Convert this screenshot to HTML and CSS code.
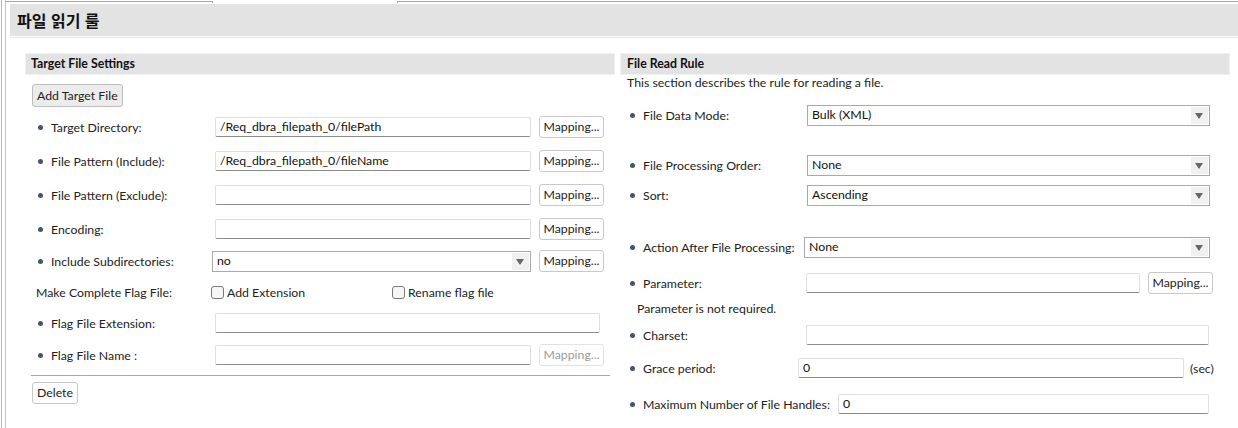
FILE: index.html
```html
<!DOCTYPE html>
<html lang="ko">
<head>
    <meta charset="UTF-8">
    <title>파일 읽기 룰</title>
    <link rel="stylesheet" href="styles.css">
</head>
<body>
    <div class="frame">
        <div class="page">
            <div class="tabs">
                <span class="tab-line tab-left"></span>
                <span class="tab-gap"></span>
                <span class="tab-line tab-right"></span>
            </div>
            <div class="page-head"><h1>파일 읽기 룰</h1></div>
            <div class="head-rule"></div>

            <div class="columns">
                <!-- 왼쪽: 대상 파일 설정 -->
                <section class="col col-left">
                    <div class="sec-head">Target File Settings</div>
                    <button class="btn btn-grey btn-add">Add Target File</button>

                    <div class="row first">
                        <div class="lbl"><i class="dot"></i>Target Directory:</div>
                        <div class="txt w-315">/Req_dbra_filepath_0/filePath</div>
                        <button class="btn btn-map">Mapping...</button>
                    </div>
                    <div class="row">
                        <div class="lbl"><i class="dot"></i>File Pattern (Include):</div>
                        <div class="txt w-315">/Req_dbra_filepath_0/fileName</div>
                        <button class="btn btn-map">Mapping...</button>
                    </div>
                    <div class="row">
                        <div class="lbl"><i class="dot"></i>File Pattern (Exclude):</div>
                        <div class="txt w-315"></div>
                        <button class="btn btn-map">Mapping...</button>
                    </div>
                    <div class="row">
                        <div class="lbl"><i class="dot"></i>Encoding:</div>
                        <div class="txt w-315"></div>
                        <button class="btn btn-map">Mapping...</button>
                    </div>
                    <div class="row row-tight">
                        <div class="lbl lbl-sel"><i class="dot"></i>Include Subdirectories:</div>
                        <div class="sel w-318">no<span class="arrow"></span></div>
                        <button class="btn btn-map">Mapping...</button>
                    </div>
                    <div class="row row-check">
                        <div class="lbl lbl-check">Make Complete Flag File:</div>
                        <label class="check check-wide"><span class="box"></span>Add Extension</label>
                        <label class="check"><span class="box"></span>Rename flag file</label>
                    </div>
                    <div class="row row-tight">
                        <div class="lbl"><i class="dot"></i>Flag File Extension:</div>
                        <div class="txt w-384"></div>
                    </div>
                    <div class="row">
                        <div class="lbl"><i class="dot"></i>Flag File Name :</div>
                        <div class="txt w-315"></div>
                        <button class="btn btn-map" disabled>Mapping...</button>
                    </div>

                    <div class="sep"></div>
                    <button class="btn btn-del">Delete</button>
                </section>

                <!-- 오른쪽: 파일 읽기 룰 -->
                <section class="col col-right">
                    <div class="sec-head">File Read Rule</div>
                    <div class="desc">This section describes the rule for reading a file.</div>

                    <div class="row row-r first">
                        <div class="lbl"><i class="dot"></i>File Data Mode:</div>
                        <div class="sel w-403">Bulk (XML)<span class="arrow"></span></div>
                    </div>
                    <div class="row row-r gap-20">
                        <div class="lbl"><i class="dot"></i>File Processing Order:</div>
                        <div class="sel w-403">None<span class="arrow"></span></div>
                    </div>
                    <div class="row row-r">
                        <div class="lbl"><i class="dot"></i>Sort:</div>
                        <div class="sel w-403">Ascending<span class="arrow"></span></div>
                    </div>
                    <div class="row row-r gap-22">
                        <div class="lbl lbl-176"><i class="dot"></i>Action After File Processing:</div>
                        <div class="sel w-406">None<span class="arrow"></span></div>
                    </div>
                    <div class="row row-r gap-6">
                        <div class="lbl lbl-178"><i class="dot"></i>Parameter:</div>
                        <div class="txt w-334"></div>
                        <button class="btn btn-map">Mapping...</button>
                    </div>
                    <div class="note">Parameter is not required.</div>
                    <div class="row row-r">
                        <div class="lbl lbl-178"><i class="dot"></i>Charset:</div>
                        <div class="txt w-403"></div>
                    </div>
                    <div class="row row-r gap-3">
                        <div class="lbl lbl-170"><i class="dot"></i>Grace period:</div>
                        <div class="txt w-386">0</div>
                        <span class="unit">(sec)</span>
                    </div>
                    <div class="row row-r gap-6">
                        <div class="lbl lbl-210"><i class="dot"></i>Maximum Number of File Handles:</div>
                        <div class="txt w-371">0</div>
                    </div>
                </section>
            </div>
        </div>
    </div>
</body>
</html>
```

FILE: styles.css
```css
body {
    margin: 0;
    background-color: #ffffff;
    color: #222222;
    font-family: Lato, "Noto Sans CJK KR", sans-serif;
    font-size: 12.3px;
    overflow: hidden;
}

.frame {
    margin-left: 1px;
    border-left: 1px solid #b8b8b8;
    padding-left: 3px;
    height: 428px;
}

.page {
    border-left: 1px solid #c4c4c4;
    padding-left: 4px;
    height: 100%;
}

/* tab strip on top */
.tabs {
    display: flex;
    height: 3px;
    margin-left: -5px;
}

.tab-line {
    margin-top: 1px;
    border-top: 1px solid #a8a8a8;
}

.tab-left {
    width: 207px;
    border-right: 1px solid #a8a8a8;
}

.tab-gap {
    width: 184px;
}

.tab-right {
    flex: 1;
    border-left: 1px solid #a8a8a8;
}

.page-head {
    margin-top: 1px;
    height: 32px;
    background-color: #e3e3e3;
    display: flex;
    align-items: center;
    padding-left: 7px;
}

.page-head h1 {
    margin: 0;
    font-family: "Noto Sans CJK KR", sans-serif;
    font-size: 16px;
    font-weight: bold;
    color: #111111;
}

.head-rule {
    height: 1px;
    margin-top: 1px;
    background-color: #e8e8e8;
}

.columns {
    display: flex;
    gap: 5px;
    padding-left: 15px;
    margin-top: 15px;
}

.col-left {
    width: 590px;
}

.col-right {
    width: 610px;
}

.sec-head {
    height: 20px;
    line-height: 20px;
    background-color: #e3e3e3;
    border: 1px solid #f1f1f1;
    padding-left: 5px;
    font-weight: bold;
    color: #111111;
}

.col-right .sec-head {
    padding-left: 6px;
}

/* buttons */
.btn {
    font-family: inherit;
    font-size: 12.3px;
    color: #222222;
    height: 22px;
    padding: 0 4px;
    background-color: #ffffff;
    border: 1px solid #c8c8c8;
    border-radius: 3px;
    line-height: 18px;
}

.btn-grey {
    background-color: #ececec;
    border-color: #bdbdbd;
}

.btn-add {
    display: block;
    margin: 9px 0 0 7px;
    height: 23px;
}

.btn-map {
    width: 65px;
    margin-left: 8px;
    padding: 0;
}

.btn-map:disabled {
    color: #9a9a9a;
    border-color: #e2e2e2;
}

.btn-del {
    display: block;
    margin: 6px 0 0 7px;
    padding: 0 4px;
}

/* form rows */
.row {
    display: flex;
    align-items: center;
    height: 34px;
    padding-left: 11px;
}

.col-left .row.first {
    margin-top: 3px;
}

.row-tight {
    height: 30px;
}

.row-check {
    height: 32px;
}

.lbl {
    width: 179px;
    flex-shrink: 0;
    display: flex;
    align-items: center;
}

.lbl-sel { width: 176px; }
.lbl-check { width: 175px; }
.lbl-176 { width: 176px; }
.lbl-178 { width: 178px; }
.lbl-170 { width: 170px; }
.lbl-210 { width: 210px; }

.dot {
    width: 5px;
    height: 5px;
    border-radius: 50%;
    background-color: #3f5674;
    margin: 0 8px 0 2px;
    flex-shrink: 0;
}

.txt {
    height: 20px;
    line-height: 18px;
    box-sizing: border-box;
    border: 1px solid #dedede;
    border-bottom-color: #8c8c8c;
    border-radius: 2px;
    padding-left: 4px;
    color: #111111;
}

.sel {
    position: relative;
    height: 21px;
    line-height: 18px;
    box-sizing: border-box;
    border: 1px solid #a9a9a9;
    padding-left: 4px;
    color: #111111;
}

.sel .arrow {
    position: absolute;
    top: 1px;
    right: 1px;
    width: 17px;
    height: 17px;
    background-color: #f0f0f0;
}

.sel .arrow::after {
    content: "";
    position: absolute;
    left: 4px;
    top: 6px;
    border-left: 4px solid transparent;
    border-right: 4px solid transparent;
    border-top: 6px solid #666666;
}

.w-315 { width: 316px; }
.w-318 { width: 319px; }
.w-384 { width: 385px; }
.w-403 { width: 403px; }
.w-406 { width: 406px; }
.w-334 { width: 334px; }
.w-386 { width: 386px; }
.w-371 { width: 371px; }

.check {
    display: flex;
    align-items: center;
}

.check-wide {
    width: 181px;
}

.check .box {
    width: 11px;
    height: 11px;
    border: 1px solid #7a7a7a;
    border-radius: 3px;
    background-color: #f6f6f6;
    margin-right: 3px;
}

.sep {
    height: 1px;
    background-color: #a8a8a8;
    margin: 3px 0 0 6px;
    width: 579px;
}

/* right column */
.desc {
    height: 15px;
    line-height: 15px;
    padding-left: 7px;
}

.row-r {
    height: 30px;
    padding-left: 8px;
}

.row-r.first { margin-top: 10px; }
.gap-20 { margin-top: 20px; }
.gap-22 { margin-top: 22px; }
.gap-6 { margin-top: 6px; }
.gap-3 { margin-top: 3px; }

.note {
    height: 22px;
    line-height: 22px;
    padding-left: 17px;
}

.unit {
    margin-left: 6px;
}
```
